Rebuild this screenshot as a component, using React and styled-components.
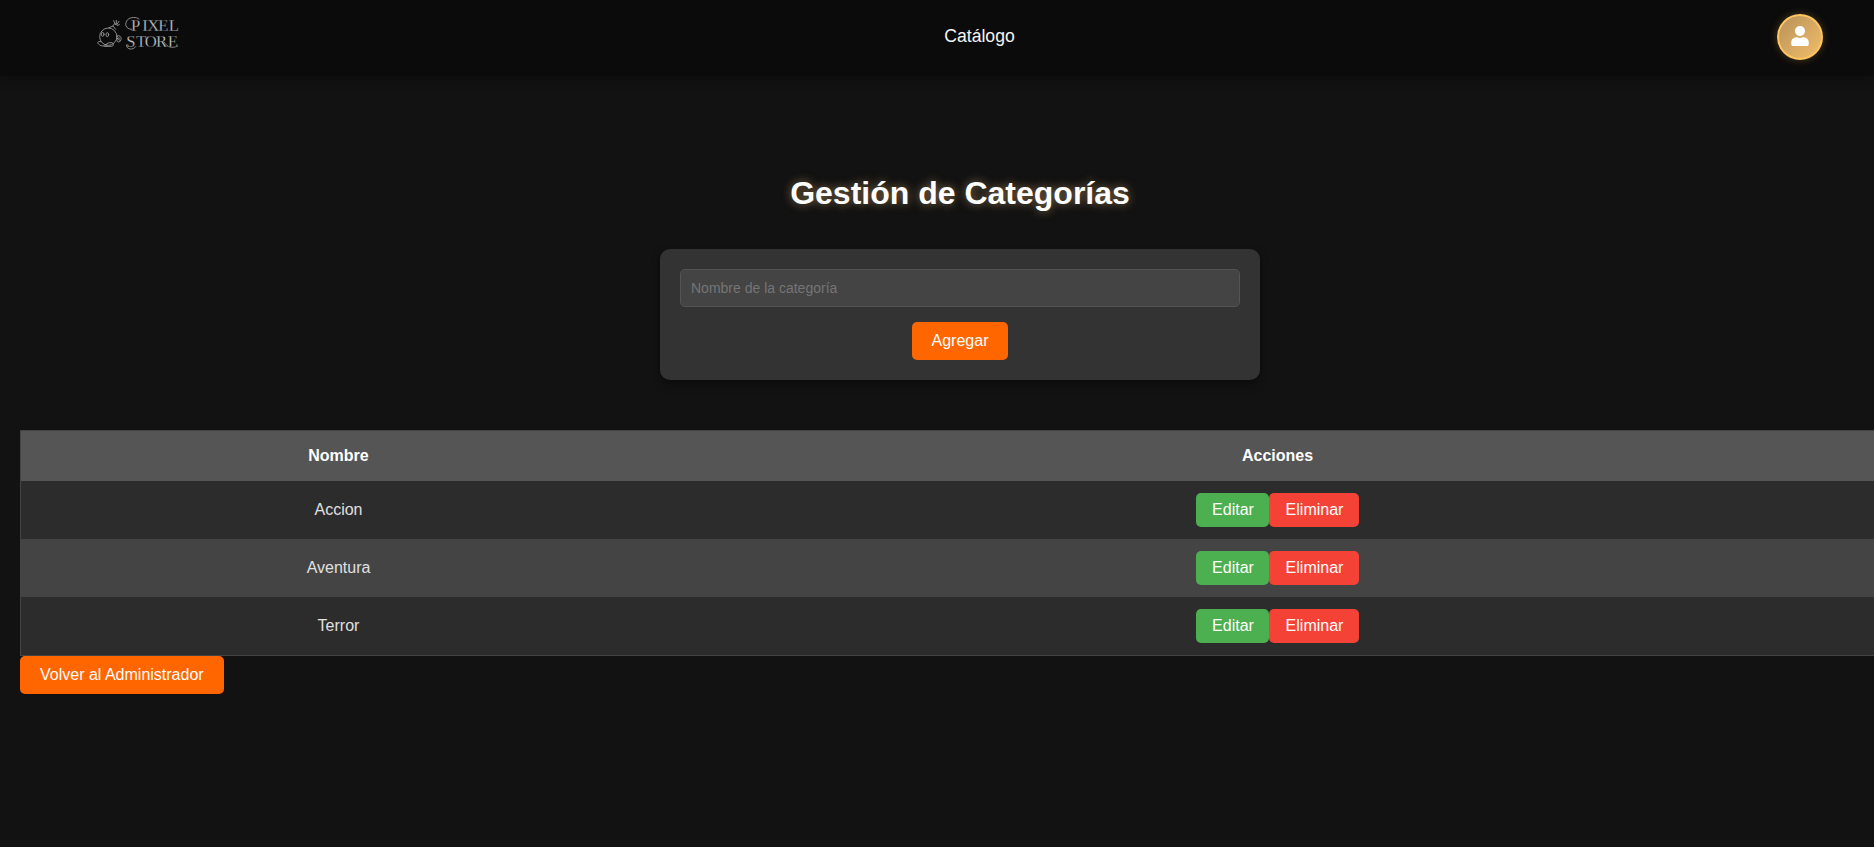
import React from "react";
import styled, { createGlobalStyle } from "styled-components";
import { FaUser } from "react-icons/fa";

const GlobalStyle = createGlobalStyle`
  *, *::before, *::after { box-sizing: border-box; }
  html, body { margin: 0; background: #121212; overflow: hidden; }
  body { font-family: Arial, "Liberation Sans", sans-serif; font-size: 16px; color: #e0e0e0; }
`;

const Page = styled.div`
  height: 847px;
  overflow: hidden;
  background: #121212;
`;

const Navbar = styled.header`
  display: grid;
  grid-template-columns: 1fr auto 1fr;
  height: 76px;
  padding: 14px 51px 0 95px;
  background: #0b0b0b;
  box-shadow: 0 4px 12px rgba(0, 0, 0, 0.3);
`;

const Logo = styled.svg`
  display: block;
  width: 86px;
  height: 38px;
`;

const NavLink = styled.a`
  margin: 12px 0 0 41px;
  font-size: 17.6px;
  line-height: 20px;
  font-weight: 500;
  color: #f5f5f5;
`;

const Avatar = styled.button`
  display: flex;
  align-items: center;
  justify-content: center;
  justify-self: end;
  width: 46px;
  height: 46px;
  padding: 0 0 3px;
  border: 2px solid #ffc560;
  border-radius: 50%;
  background: linear-gradient(135deg, #b8925a, #f2bd68);
  box-shadow: 0 0 8px rgba(255, 197, 96, 0.25);
  color: #fff;
  font-size: 20px;
`;

const Content = styled.main`
  width: 1920px;
  padding: 97px 20px 20px;
`;

const Title = styled.h1`
  margin: 0 0 36px;
  font-size: 32px;
  line-height: 40px;
  text-align: center;
  color: #fff;
  text-shadow: 0 0 10px rgba(255, 205, 135, 0.5);
`;

const Form = styled.form`
  display: flex;
  flex-direction: column;
  align-items: center;
  gap: 15px;
  width: 600px;
  margin: 0 auto 50px;
  padding: 20px;
  border-radius: 10px;
  background: #333;
  box-shadow: 0 4px 10px rgba(0, 0, 0, 0.4);
`;

const Input = styled.input`
  width: 100%;
  height: 38px;
  padding: 10px;
  border: 1px solid #555;
  border-radius: 5px;
  background: #444;
  color: #fff;
  font: 14px Arial, "Liberation Sans", sans-serif;
  &::placeholder { color: #757575; }
`;

const Button = styled.button`
  display: block;
  height: 38px;
  padding: 0 20px;
  border: 0;
  border-radius: 5px;
  background: #ff6600;
  color: #fff;
  font: 16px Arial, "Liberation Sans", sans-serif;
`;

const Table = styled.div`
  border: 1px solid #444;
`;

const Row = styled.div`
  display: grid;
  grid-template-columns: 635px 1fr;
  align-items: center;
  justify-items: center;
  height: 58px;
  background: ${(p) => (p.$alt ? "#444" : "#2c2c2c")};
`;

const HeadRow = styled(Row)`
  height: 50px;
  background: #555;
  color: #fff;
  font-weight: bold;
`;

const Cell = styled.div`
  display: flex;
  line-height: 18px;
`;

const ActionButton = styled.button`
  height: 34px;
  width: ${(p) => (p.$danger ? "90px" : "73px")};
  padding: 0 0 0 1px;
  border: 0;
  border-radius: 5px;
  background: ${(p) => (p.$danger ? "#f44336" : "#4caf50")};
  color: #fff;
  font: 16px Arial, "Liberation Sans", sans-serif;
`;

const categories = ["Accion", "Aventura", "Terror"];

function BrandLogo() {
  return (
    <Logo viewBox="0 0 258 114" fill="none" stroke="#aaa" strokeWidth="2.4" strokeLinecap="round">
      <circle cx="40" cy="68" r="26" />
      <ellipse cx="23" cy="61" rx="4" ry="6" />
      <ellipse cx="37" cy="62" rx="4" ry="6" />
      <path d="M42 41L54 36L62 46M54 35C57 28 61 28 65 33M61 32L56 20M64 30V19M66 31L72 22M67 34L73 32" />
      <path d="M17 83C8 80 5 87 13 92C20 98 27 96 33 91M34 96C29 90 39 85 51 86C58 89 56 97 49 97H27" />
      <path d="M66 66C72 62 80 68 78 76C76 85 67 87 66 79C65 73 70 69 74 73M66 72L76 80" />
      <path d="M110 46C92 46 87 29 98 17C106 9 124 8 132 15" />
      <path d="M94 93C94 107 114 110 122 98" />
      <path d="M207 84C217 101 232 105 248 96" />
      <g fill="#c4c4c4" stroke="#0b0b0b" strokeWidth="0.8" fontFamily="Liberation Serif, serif" fontSize="50">
        <text y="52" x="108 142 157 190 221">PIXEL</text>
        <text y="99" x="94 123 149 183 218">STORE</text>
      </g>
    </Logo>
  );
}

export default function App() {
  return (
    <Page>
      <GlobalStyle />
      <Navbar>
        <BrandLogo />
        <NavLink>Catálogo</NavLink>
        <Avatar aria-label="Usuario"><FaUser /></Avatar>
      </Navbar>
      <Content>
        <Title>Gestión de Categorías</Title>
        <Form>
          <Input placeholder="Nombre de la categoría" />
          <Button type="button">Agregar</Button>
        </Form>
        <Table>
          <HeadRow>
            <Cell>Nombre</Cell>
            <Cell>Acciones</Cell>
          </HeadRow>
          {categories.map((name, i) => (
            <Row key={name} $alt={i % 2 === 1}>
              <Cell>{name}</Cell>
              <Cell>
                <ActionButton>Editar</ActionButton>
                <ActionButton $danger>Eliminar</ActionButton>
              </Cell>
            </Row>
          ))}
        </Table>
        <Button>Volver al Administrador</Button>
      </Content>
    </Page>
  );
}
